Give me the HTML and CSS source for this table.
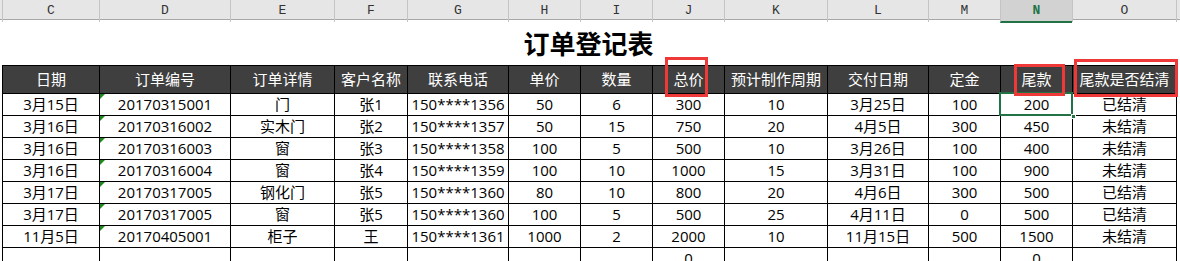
FILE: index.html
```html
<!DOCTYPE html>
<html lang="zh">
<head>
<meta charset="utf-8">
<title>订单登记表</title>
<link rel="stylesheet" href="styles.css">
</head>
<body>
<div class="sheet">
  <div class="colbar">
    <div class="lead"></div>
    <div class="letter">C</div>
    <div class="letter">D</div>
    <div class="letter">E</div>
    <div class="letter">F</div>
    <div class="letter">G</div>
    <div class="letter">H</div>
    <div class="letter">I</div>
    <div class="letter">J</div>
    <div class="letter">K</div>
    <div class="letter">L</div>
    <div class="letter">M</div>
    <div class="letter active">N</div>
    <div class="letter">O</div>
    <div class="letter"></div>
  </div>
  <h1 class="title">订单登记表</h1>
  <div class="grid">
    <div class="c h">日期</div>
    <div class="c h">订单编号</div>
    <div class="c h">订单详情</div>
    <div class="c h">客户名称</div>
    <div class="c h">联系电话</div>
    <div class="c h">单价</div>
    <div class="c h">数量</div>
    <div class="c h">总价<span class="mark mark-j"></span></div>
    <div class="c h">预计制作周期</div>
    <div class="c h">交付日期</div>
    <div class="c h">定金</div>
    <div class="c h">尾款<span class="mark mark-n"></span></div>
    <div class="c h">尾款是否结清<span class="mark mark-o"></span></div>

    <div class="c">3月15日</div><div class="c tri">20170315001</div><div class="c">门</div><div class="c">张1</div><div class="c">150****1356</div><div class="c">50</div><div class="c">6</div><div class="c">300</div><div class="c">10</div><div class="c">3月25日</div><div class="c">100</div><div class="c sel">200</div><div class="c">已结清</div>

    <div class="c">3月16日</div><div class="c tri">20170316002</div><div class="c">实木门</div><div class="c">张2</div><div class="c">150****1357</div><div class="c">50</div><div class="c">15</div><div class="c">750</div><div class="c">20</div><div class="c">4月5日</div><div class="c">300</div><div class="c">450</div><div class="c">未结清</div>

    <div class="c">3月16日</div><div class="c tri">20170316003</div><div class="c">窗</div><div class="c">张3</div><div class="c">150****1358</div><div class="c">100</div><div class="c">5</div><div class="c">500</div><div class="c">10</div><div class="c">3月26日</div><div class="c">100</div><div class="c">400</div><div class="c">未结清</div>

    <div class="c">3月16日</div><div class="c tri">20170316004</div><div class="c">窗</div><div class="c">张4</div><div class="c">150****1359</div><div class="c">100</div><div class="c">10</div><div class="c">1000</div><div class="c">15</div><div class="c">3月31日</div><div class="c">100</div><div class="c">900</div><div class="c">未结清</div>

    <div class="c">3月17日</div><div class="c tri">20170317005</div><div class="c">钢化门</div><div class="c">张5</div><div class="c">150****1360</div><div class="c">80</div><div class="c">10</div><div class="c">800</div><div class="c">20</div><div class="c">4月6日</div><div class="c">300</div><div class="c">500</div><div class="c">已结清</div>

    <div class="c">3月17日</div><div class="c tri">20170317005</div><div class="c">窗</div><div class="c">张5</div><div class="c">150****1360</div><div class="c">100</div><div class="c">5</div><div class="c">500</div><div class="c">25</div><div class="c">4月11日</div><div class="c">0</div><div class="c">500</div><div class="c">已结清</div>

    <div class="c">11月5日</div><div class="c tri">20170405001</div><div class="c">柜子</div><div class="c">王</div><div class="c">150****1361</div><div class="c">1000</div><div class="c">2</div><div class="c">2000</div><div class="c">10</div><div class="c">11月15日</div><div class="c">500</div><div class="c">1500</div><div class="c">未结清</div>

    <div class="c"></div><div class="c"></div><div class="c"></div><div class="c"></div><div class="c"></div><div class="c"></div><div class="c"></div><div class="c">0</div><div class="c"></div><div class="c"></div><div class="c"></div><div class="c">0</div><div class="c"></div>
  </div>
</div>
</body>
</html>
```
FILE: styles.css
```css
html, body {
  margin: 0;
  padding: 0;
  background: #ffffff;
  overflow: hidden;
}

.sheet {
  width: 1180px;
  height: 261px;
  overflow: hidden;
  font-family: "Open Sans", "Noto Sans CJK SC", sans-serif;
  color: #000;
}

.colbar {
  display: grid;
  grid-template-columns: 2px 97px 131px 104px 73px 101px 72px 72px 72px 103px 101px 72px 72px 104px 1fr;
  height: 20px;
  box-sizing: border-box;
  background: #e6e6e6;
  border-bottom: 1px solid #a8a8a8;
}

.letter {
  border-left: 1px solid #c4c4c4;
  font-family: "Liberation Mono", "DejaVu Sans Mono", monospace;
  font-size: 13px;
  line-height: 21px;
  text-align: center;
  color: #333;
}

.letter.active {
  background: #d2d2d2;
  color: #217346;
  font-weight: bold;
  border-bottom: 2px solid #217346;
  margin-bottom: -1px;
}

.title {
  margin: 0;
  height: 45px;
  width: 1177px;
  line-height: 45px;
  text-align: center;
  font-family: "Noto Sans CJK SC", sans-serif;
  font-size: 26px;
  font-weight: bold;
}

.grid {
  margin-left: 2px;
  display: grid;
  grid-template-columns: 97px 131px 104px 73px 101px 72px 72px 72px 103px 101px 72px 72px 104px;
  grid-template-rows: 28px;
  grid-auto-rows: 22px;
  border-left: 1px solid #000;
  border-top: 1px solid #000;
  width: 1175px;
}

.c {
  position: relative;
  box-sizing: border-box;
  border-right: 1px solid #000;
  border-bottom: 1px solid #000;
  font-size: 15px;
  line-height: 20px;
  text-align: center;
  white-space: nowrap;
}

.h {
  line-height: 26px;
  background: #3f3f3f;
  color: #ffffff;
}

.tri::before {
  content: "";
  position: absolute;
  left: 0;
  top: 0;
  border-top: 5px solid #1e8a1e;
  border-right: 5px solid transparent;
}

.sel::after {
  content: "";
  position: absolute;
  left: -2px;
  top: -2px;
  right: -1px;
  bottom: -1px;
  border: 2px solid #217346;
  pointer-events: none;
}

.sel::before {
  content: "";
  position: absolute;
  right: -4px;
  bottom: -4px;
  width: 5px;
  height: 5px;
  background: #217346;
  border: 1px solid #fff;
  box-sizing: border-box;
  z-index: 2;
}

.mark {
  position: absolute;
  box-sizing: border-box;
  border: 3px solid #ef3838;
  z-index: 3;
}

.mark-j {
  left: 12px;
  top: -9px;
  width: 43px;
  height: 40px;
}

.mark-n {
  left: 13px;
  top: -2px;
  width: 51px;
  height: 32px;
}

.mark-o {
  left: 1px;
  top: -7px;
  width: 104px;
  height: 38px;
}
```
